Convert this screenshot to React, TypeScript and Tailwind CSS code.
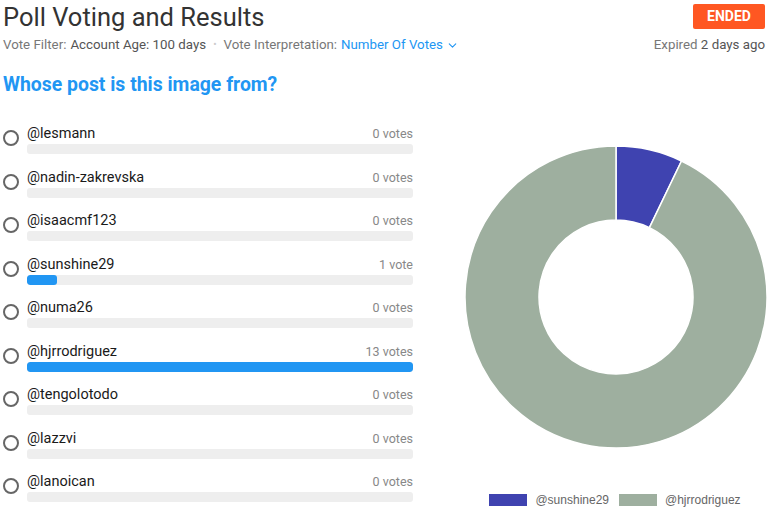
import { ChevronDown } from 'lucide-react'

interface PollOption {
    name: string
    votes: number
}

const options: PollOption[] = [
    { name: '@lesmann', votes: 0 },
    { name: '@nadin-zakrevska', votes: 0 },
    { name: '@isaacmf123', votes: 0 },
    { name: '@sunshine29', votes: 1 },
    { name: '@numa26', votes: 0 },
    { name: '@hjrrodriguez', votes: 13 },
    { name: '@tengolotodo', votes: 0 },
    { name: '@lazzvi', votes: 0 },
    { name: '@lanoican', votes: 0 }
]

const chartColors: Record<string, string> = {
    '@sunshine29': '#3f43b0',
    '@hjrrodriguez': '#9eaf9f'
}

function arcPath(cx: number, cy: number, r: number, ir: number, start: number, end: number) {
    const pt = (rad: number, a: number) => {
        const t = (a - 90) * Math.PI / 180
        return `${cx + rad * Math.cos(t)} ${cy + rad * Math.sin(t)}`
    }
    const large = end - start > 180 ? 1 : 0
    return `M ${pt(r, start)} A ${r} ${r} 0 ${large} 1 ${pt(r, end)} L ${pt(ir, end)} A ${ir} ${ir} 0 ${large} 0 ${pt(ir, start)} Z`
}

function Donut() {
    const data = options.filter(o => o.votes > 0)
    const total = data.reduce((s, o) => s + o.votes, 0)
    let angle = 0
    return (
        <svg width="310" height="310" viewBox="0 0 310 310">
            {data.map(o => {
                const start = angle
                angle += (o.votes / total) * 360
                return (
                    <path
                        key={o.name}
                        d={arcPath(155, 155, 151, 77, start, angle)}
                        fill={chartColors[o.name]}
                        stroke="#fff"
                        strokeWidth="1.5"
                    />
                )
            })}
        </svg>
    )
}

export default function App() {
    const max = Math.max(...options.map(o => o.votes))

    return (
        <div className="w-[768px] h-[511px] overflow-hidden bg-white px-[3px] font-['Roboto',sans-serif]">
            <div className="flex items-start justify-between">
                <div>
                    <h1 className="text-[25.5px] leading-[34px] text-[#333]">Poll Voting and Results</h1>
                    <div className="flex items-center text-[13.3px] leading-[20px] text-[#777] mt-[1px]">
                        <span>Vote Filter:</span>
                        <span className="ml-1 text-[#555]">Account Age: 100 days</span>
                        <span className="mx-[7px] text-[#ccc] text-[10px]">•</span>
                        <span>Vote Interpretation:</span>
                        <span className="ml-1 text-[#2196f3] flex items-center">
                            Number Of Votes
                            <ChevronDown className="w-[13px] h-[13px] ml-[3px]" strokeWidth={2} />
                        </span>
                    </div>
                </div>
                <div className="flex flex-col items-end pt-[4px]">
                    <span className="bg-[#ff5722] text-white text-[14px] font-bold leading-[25px] w-[72px] text-center rounded-[2px]">
                        ENDED
                    </span>
                    <div className="text-[13.3px] leading-[20px] text-[#777] mt-[6px]">
                        Expired <span className="text-[#555]">2 days ago</span>
                    </div>
                </div>
            </div>

            <h2 className="text-[19.4px] font-bold leading-[28px] text-[#2196f3] mt-[16px]">
                Whose post is this image from?
            </h2>

            <div className="flex mt-[26px]">
                <div className="w-[410px] shrink-0">
                    {options.map(o => (
                        <div key={o.name} className="flex h-[43.5px]">
                            <div className="w-[16px] h-[16px] rounded-full border-2 border-[#666] mt-[5px] shrink-0" />
                            <div className="flex-1 ml-[8px]">
                                <div className="flex items-end justify-between leading-[18px]">
                                    <span className="text-[14.5px] text-[#1a1a1a]">{o.name}</span>
                                    <span className="text-[12.5px] text-[#888]">
                                        {o.votes} {o.votes === 1 ? 'vote' : 'votes'}
                                    </span>
                                </div>
                                <div className="h-[10px] mt-[1px] rounded-[3px] bg-[#eee] overflow-hidden">
                                    <div
                                        className="h-full bg-[#2196f3] rounded-[3px]"
                                        style={{ width: `${max ? (o.votes / max) * 100 : 0}%` }}
                                    />
                                </div>
                            </div>
                        </div>
                    ))}
                </div>
                <div className="flex-1 flex flex-col items-center">
                    <div className="mt-[17px] ml-[48px]">
                        <Donut />
                    </div>
                    <div className="flex items-center gap-[8px] mt-[39px] ml-[46px] font-['Liberation_Sans',sans-serif] text-[12px] text-[#666]">
                        <span className="w-[38px] h-[12px] bg-[#3f43b0]" />
                        <span>@sunshine29</span>
                        <span className="w-[38px] h-[12px] bg-[#9eaf9f] ml-[2px]" />
                        <span>@hjrrodriguez</span>
                    </div>
                </div>
            </div>
        </div>
    )
}
